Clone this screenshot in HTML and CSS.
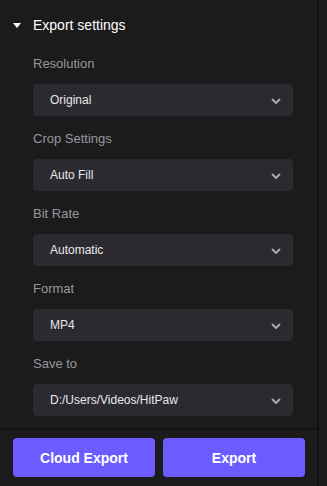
FILE: index.html
```html
<!DOCTYPE html>
<html lang="en">
<head>
    <meta charset="UTF-8">
    <meta name="viewport" content="width=device-width, initial-scale=1.0">
    <title>Export settings</title>
    <link rel="stylesheet" href="styles.css">
</head>
<body>
    <div class="panel">
        <div class="section-head">
            <span class="caret"></span>
            <span class="section-title">Export settings</span>
        </div>

        <div class="fields">
            <div class="field">
                <div class="field-label">Resolution</div>
                <div class="select">
                    <span>Original</span>
                    <svg class="chev" width="10" height="6" viewBox="0 0 10 6"><path d="M1 1 L5 5 L9 1" fill="none" stroke="#a9a8ae" stroke-width="2"/></svg>
                </div>
            </div>
            <div class="field">
                <div class="field-label">Crop Settings</div>
                <div class="select">
                    <span>Auto Fill</span>
                    <svg class="chev" width="10" height="6" viewBox="0 0 10 6"><path d="M1 1 L5 5 L9 1" fill="none" stroke="#a9a8ae" stroke-width="2"/></svg>
                </div>
            </div>
            <div class="field">
                <div class="field-label">Bit Rate</div>
                <div class="select">
                    <span>Automatic</span>
                    <svg class="chev" width="10" height="6" viewBox="0 0 10 6"><path d="M1 1 L5 5 L9 1" fill="none" stroke="#a9a8ae" stroke-width="2"/></svg>
                </div>
            </div>
            <div class="field">
                <div class="field-label">Format</div>
                <div class="select">
                    <span>MP4</span>
                    <svg class="chev" width="10" height="6" viewBox="0 0 10 6"><path d="M1 1 L5 5 L9 1" fill="none" stroke="#a9a8ae" stroke-width="2"/></svg>
                </div>
            </div>
            <div class="field">
                <div class="field-label">Save to</div>
                <div class="select">
                    <span>D:/Users/Videos/HitPaw</span>
                    <svg class="chev" width="10" height="6" viewBox="0 0 10 6"><path d="M1 1 L5 5 L9 1" fill="none" stroke="#a9a8ae" stroke-width="2"/></svg>
                </div>
            </div>
        </div>

        <div class="actions">
            <button class="btn">Cloud Export</button>
            <button class="btn">Export</button>
        </div>
    </div>
</body>
</html>
```

FILE: styles.css
```css
html,
body {
    margin: 0;
    padding: 0;
}

body {
    font: 13px 'Liberation Sans', Arial, sans-serif;
    background: #1b1b1c;
    color: #e6e6e6;
    width: 327px;
    height: 486px;
    overflow: hidden;
}

button {
    margin: 0;
    padding: 0;
    border: 0;
    background: none;
    font-family: inherit;
    color: inherit;
    -webkit-appearance: none;
    appearance: none;
}

/* panel */
.panel {
    width: 317px;
    height: 486px;
    border-right: 2px solid #111112;
    display: flex;
    flex-direction: column;
}

.section-head {
    height: 50px;
    display: flex;
    align-items: center;
    padding-left: 13px;
    gap: 12px;
}

.caret {
    width: 0;
    height: 0;
    border-left: 4px solid transparent;
    border-right: 4px solid transparent;
    border-top: 5px solid #ffffff;
    margin-top: 1px;
}

.section-title {
    font-size: 14px;
    color: #ffffff;
}

.fields {
    padding: 4px 24px 0 33px;
}

.field {
    margin-bottom: 13px;
}

.field:last-child {
    margin-bottom: 12px;
}

.field-label {
    height: 20px;
    line-height: 20px;
    color: #98979c;
    margin-bottom: 10px;
}

.select {
    height: 32px;
    background: #2b2a31;
    border-radius: 4px;
    display: flex;
    align-items: center;
    justify-content: space-between;
    padding: 0 12px 0 17px;
    font-size: 12px;
    color: #e8e8ea;
}

.chev {
    margin-top: 1px;
}

/* footer buttons */
.actions {
    border-top: 2px solid #111112;
    display: flex;
    gap: 8px;
    padding: 8px 12px 0 13px;
}

.btn {
    width: 142px;
    height: 39px;
    background: #6c5cff;
    border-radius: 4px;
    font-size: 14px;
    font-weight: 700;
    color: #ffffff;
}
```
